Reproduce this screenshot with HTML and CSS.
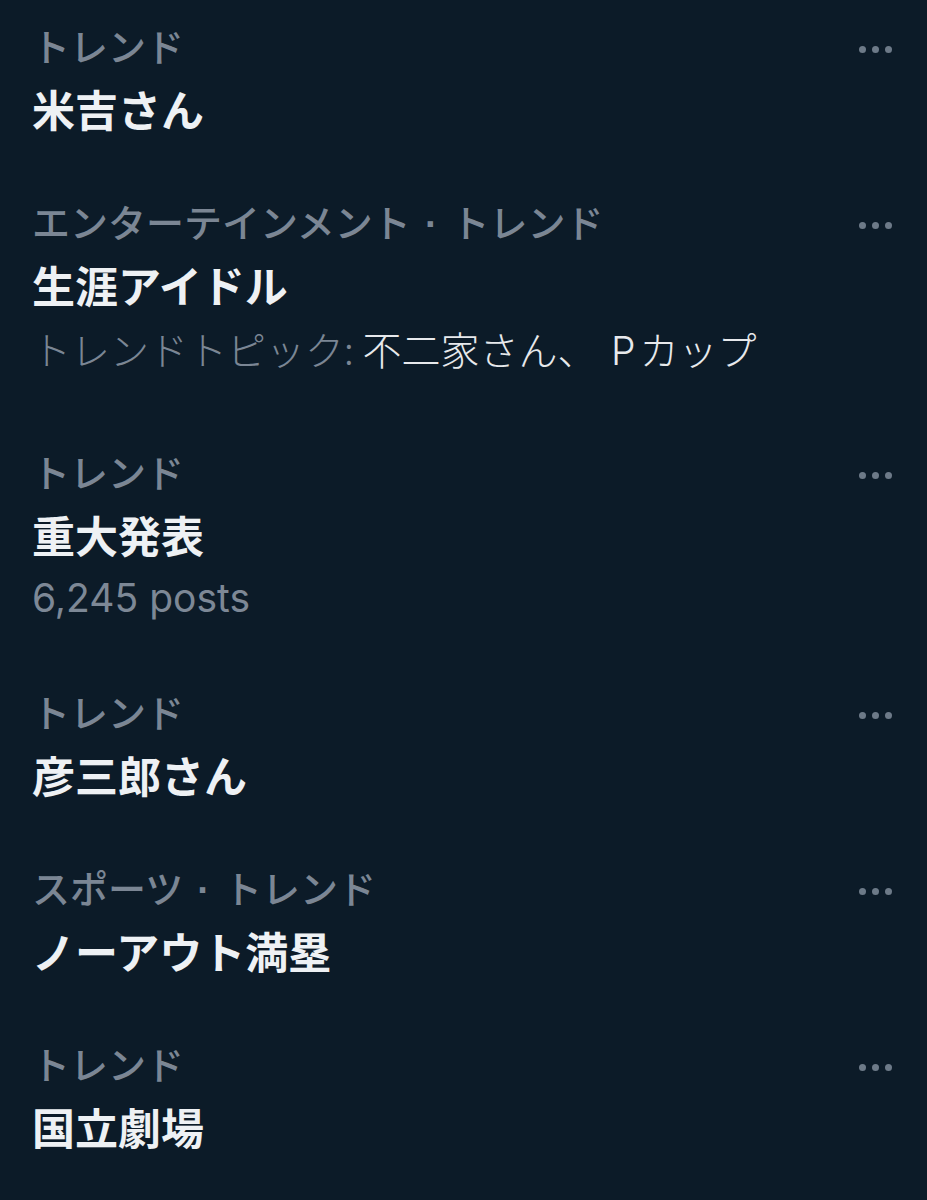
FILE: index.html
```html
<!DOCTYPE html>
<html lang="ja">
<head>
<meta charset="utf-8">
<link rel="stylesheet" href="styles.css">
</head>
<body>
<main class="list">
  <div class="trend">
    <div class="info">
      <div class="cat">トレンド</div>
      <div class="title">米吉さん</div>
    </div>
    <div class="more"><span></span><span></span><span></span></div>
  </div>
  <div class="trend">
    <div class="info">
      <div class="cat">エンターテインメント<span class="sep">·</span>トレンド</div>
      <div class="title">生涯アイドル</div>
      <div class="sub"><span class="sub-label">トレンドトピック:</span> <span class="sub-val">不二家さん、 <span class="latin">P</span>カップ</span></div>
    </div>
    <div class="more"><span></span><span></span><span></span></div>
  </div>
  <div class="trend">
    <div class="info">
      <div class="cat">トレンド</div>
      <div class="title">重大発表</div>
      <div class="posts">6,245 posts</div>
    </div>
    <div class="more"><span></span><span></span><span></span></div>
  </div>
  <div class="trend">
    <div class="info">
      <div class="cat">トレンド</div>
      <div class="title">彦三郎さん</div>
    </div>
    <div class="more"><span></span><span></span><span></span></div>
  </div>
  <div class="trend">
    <div class="info">
      <div class="cat">スポーツ<span class="sep">·</span>トレンド</div>
      <div class="title">ノーアウト満塁</div>
    </div>
    <div class="more"><span></span><span></span><span></span></div>
  </div>
  <div class="trend">
    <div class="info">
      <div class="cat">トレンド</div>
      <div class="title">国立劇場</div>
    </div>
    <div class="more"><span></span><span></span><span></span></div>
  </div>
</main>
</body>
</html>
```

FILE: styles.css
```css
html, body {
  margin: 0;
  padding: 0;
  background: #0c1b28;
}
body {
  width: 927px;
  height: 1200px;
  overflow: hidden;
  font-family: "Noto Sans CJK JP", "Noto Sans", sans-serif;
}
.list {
  display: flex;
  flex-direction: column;
}
.trend {
  display: flex;
  justify-content: space-between;
  align-items: flex-start;
  padding: 14px 35px 36px 32px;
}
.info {
  display: flex;
  flex-direction: column;
}
.cat {
  color: #7b8694;
  font-size: 38px;
  font-weight: 500;
  line-height: 62px;
  height: 62px;
}
.sep {
  display: inline-block;
  margin: 0 14px;
  font-family: "Liberation Sans", sans-serif;
  font-weight: 700;
}
.title {
  color: #eef1f4;
  font-size: 43px;
  font-weight: 700;
  line-height: 64px;
  height: 64px;
}
.sub {
  font-size: 39px;
  line-height: 64px;
  font-weight: 300;
  margin-bottom: 7px;
}
.sub-label {
  color: #7b8694;
}
.sub-val {
  color: #e7e9ec;
}
.latin {
  font-family: Inter, "Noto Sans", sans-serif;
  margin: 0 4px 0 6px;
}
.posts {
  color: #7d8896;
  font-family: Inter, "Noto Sans", sans-serif;
  font-size: 39px;
  line-height: 64px;
}
.more {
  display: flex;
  gap: 6px;
  margin-top: 32px;
}
.more span {
  width: 7px;
  height: 7px;
  border-radius: 50%;
  background: #6d7a88;
}
```
